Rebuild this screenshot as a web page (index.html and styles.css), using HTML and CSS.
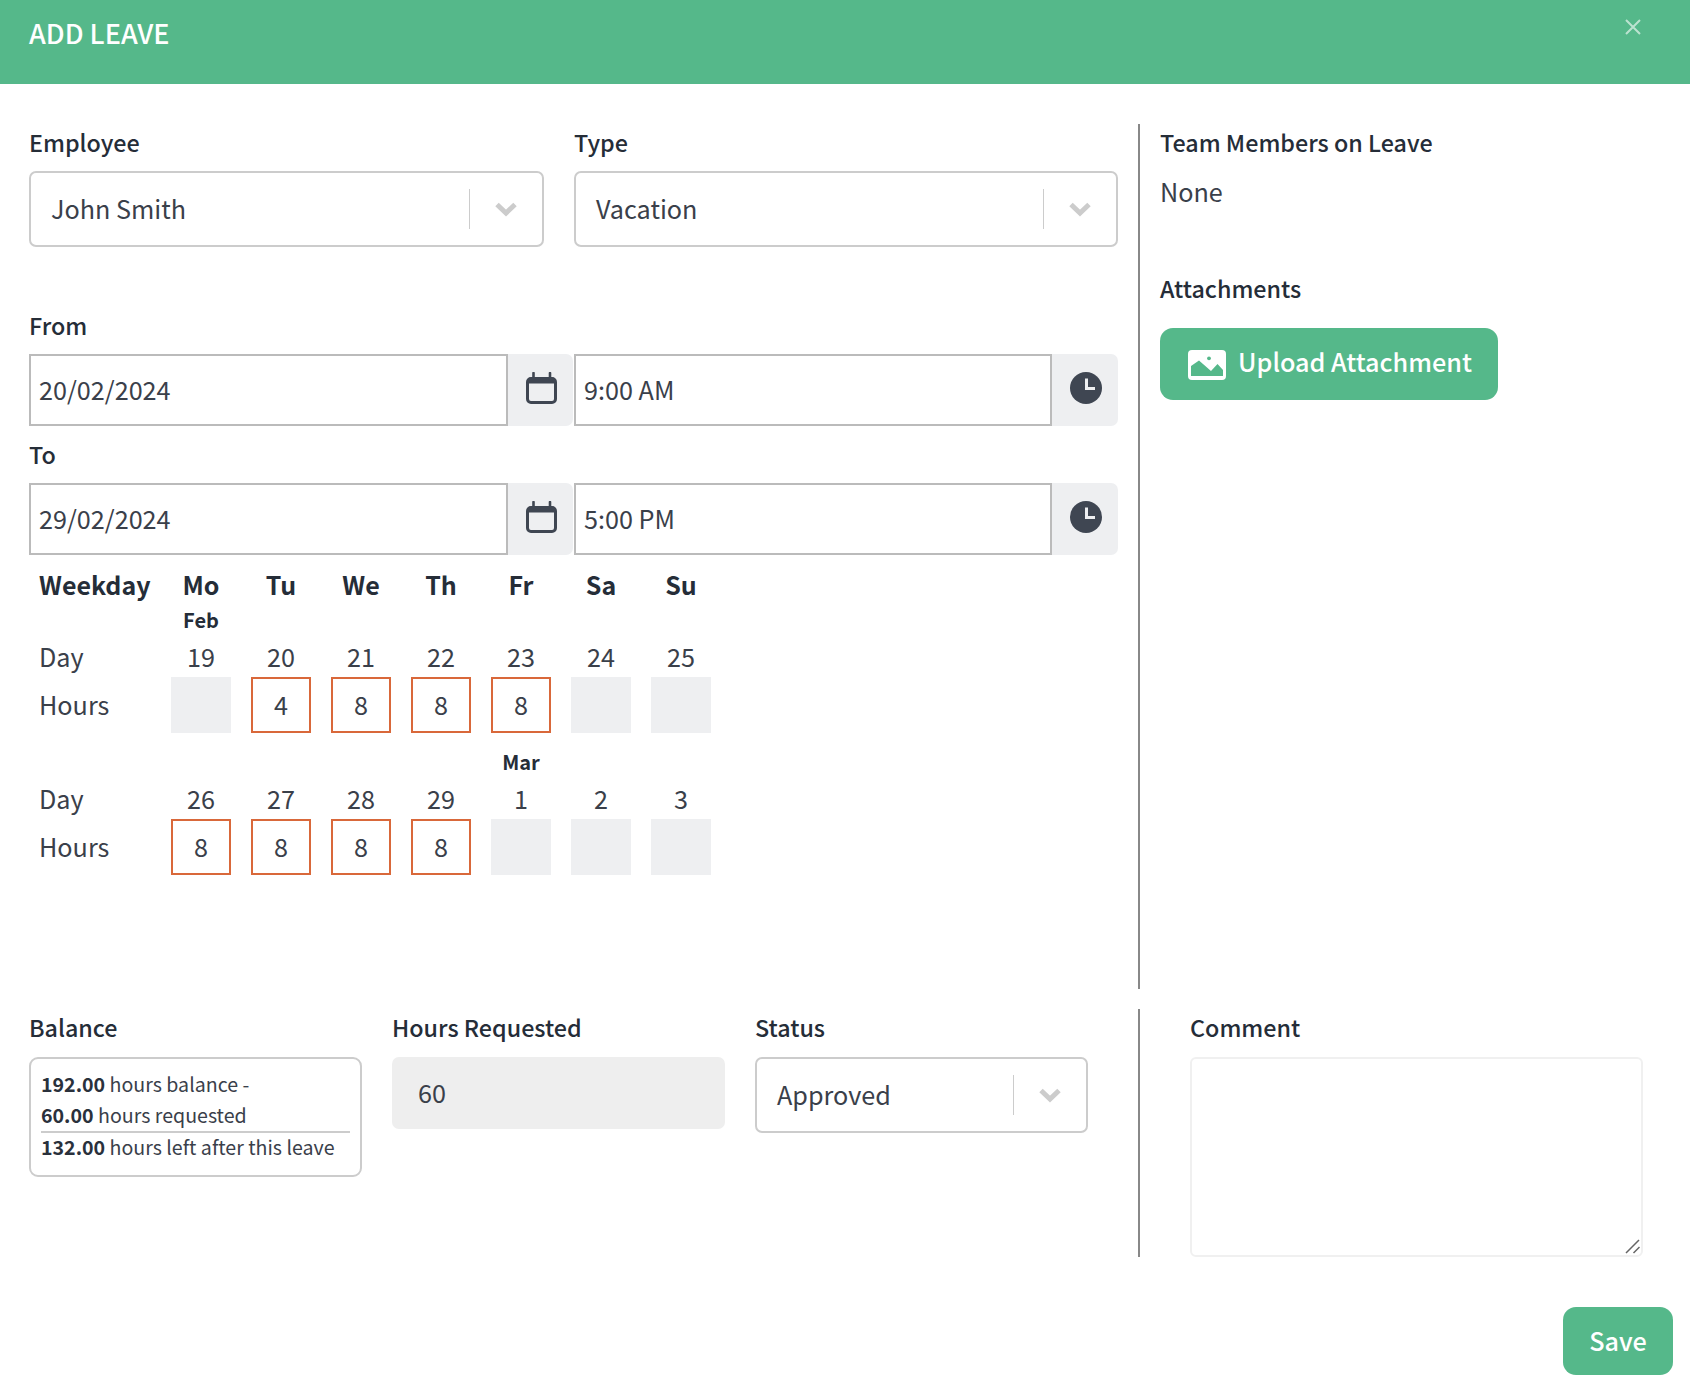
FILE: index.html
```html
<!DOCTYPE html>
<html lang="en">
<head>
<meta charset="utf-8">
<title>Add Leave</title>
<link rel="stylesheet" href="styles.css">
</head>
<body>
<header class="modal-header">
  <h1 class="modal-title">ADD LEAVE</h1>
  <svg class="close" viewBox="0 0 16 16" width="16" height="16"><path d="M1 1l14 14M15 1L1 15" fill="none" stroke="currentColor" stroke-width="2"/></svg>
</header>
<main>
  <section class="top">
    <div class="left">
      <div class="pair">
        <div>
          <label class="label">Employee</label>
          <div class="select"><span class="select-value">John Smith</span><span class="sep"></span><svg class="chev" viewBox="0 0 24 16" width="24" height="16"><path d="M3 3.500l9 8.500 9-8.500" fill="none" stroke="#ccc" stroke-width="5"/></svg></div>
        </div>
        <div>
          <label class="label">Type</label>
          <div class="select"><span class="select-value">Vacation</span><span class="sep"></span><svg class="chev" viewBox="0 0 24 16" width="24" height="16"><path d="M3 3.500l9 8.500 9-8.500" fill="none" stroke="#ccc" stroke-width="5"/></svg></div>
        </div>
      </div>
      <label class="label label-from">From</label>
      <div class="dt-row">
        <div class="group"><div class="input">20/02/2024</div><div class="addon"><svg viewBox="0 0 32 32" width="32" height="32"><path d="M7.500 1v6M24 1v6" stroke="#3f4652" stroke-width="2.600" stroke-linecap="round"/><rect x="1.500" y="6.500" width="28" height="24" rx="3.500" fill="none" stroke="#3f4652" stroke-width="3"/><path d="M1.500 9a3.500 3.500 0 0 1 3.500-3.500h21a3.500 3.500 0 0 1 3.500 3.500v2.500H1.500z" fill="#3f4652"/></svg></div></div>
        <div class="group"><div class="input">9:00 AM</div><div class="addon addon-time"><svg viewBox="0 0 32 32" width="32" height="32"><circle cx="16" cy="16" r="16" fill="#3f4652"/><path d="M16.500 6.500V16.500H25" fill="none" stroke="#eeeff1" stroke-width="3"/></svg></div></div>
      </div>
      <label class="label label-to">To</label>
      <div class="dt-row">
        <div class="group"><div class="input">29/02/2024</div><div class="addon"><svg viewBox="0 0 32 32" width="32" height="32"><path d="M7.500 1v6M24 1v6" stroke="#3f4652" stroke-width="2.600" stroke-linecap="round"/><rect x="1.500" y="6.500" width="28" height="24" rx="3.500" fill="none" stroke="#3f4652" stroke-width="3"/><path d="M1.500 9a3.500 3.500 0 0 1 3.500-3.500h21a3.500 3.500 0 0 1 3.500 3.500v2.500H1.500z" fill="#3f4652"/></svg></div></div>
        <div class="group"><div class="input">5:00 PM</div><div class="addon addon-time"><svg viewBox="0 0 32 32" width="32" height="32"><circle cx="16" cy="16" r="16" fill="#3f4652"/><path d="M16.500 6.500V16.500H25" fill="none" stroke="#eeeff1" stroke-width="3"/></svg></div></div>
      </div>
      <div class="cal">
        <div class="row row-head"><span class="rowname">Weekday</span><span>Mo</span><span>Tu</span><span>We</span><span>Th</span><span>Fr</span><span>Sa</span><span>Su</span></div>
        <div class="row row-month"><span></span><span>Feb</span><span></span><span></span><span></span><span></span><span></span><span></span></div>
        <div class="row row-day"><span class="rowname">Day</span><span>19</span><span>20</span><span>21</span><span>22</span><span>23</span><span>24</span><span>25</span></div>
        <div class="row row-hours"><span class="rowname">Hours</span><span class="off"></span><span class="on">4</span><span class="on">8</span><span class="on">8</span><span class="on">8</span><span class="off"></span><span class="off"></span></div>
        <div class="row row-month second"><span></span><span></span><span></span><span></span><span></span><span>Mar</span><span></span><span></span></div>
        <div class="row row-day"><span class="rowname">Day</span><span>26</span><span>27</span><span>28</span><span>29</span><span>1</span><span>2</span><span>3</span></div>
        <div class="row row-hours"><span class="rowname">Hours</span><span class="on">8</span><span class="on">8</span><span class="on">8</span><span class="on">8</span><span class="off"></span><span class="off"></span><span class="off"></span></div>
      </div>
    </div>
    <aside class="right">
      <label class="label">Team Members on Leave</label>
      <p class="none">None</p>
      <label class="label label-att">Attachments</label>
      <button class="upload" type="button"><svg class="upload-icon" viewBox="0 0 38 30" width="38" height="30"><rect width="38" height="30" rx="4" fill="#fff"/><path fill="#55b88a" d="M3 26V16l8-5.500L23 21l6.500-7 5.500 6v6z"/><circle cx="21" cy="8.300" r="1.900" fill="#55b88a"/></svg><span>Upload Attachment</span></button>
    </aside>
  </section>
  <section class="bottom">
    <div class="bottom-left">
      <div>
        <label class="label label-b">Balance</label>
        <div class="balance">
          <p><b>192.00</b> hours balance -</p>
          <p><b>60.00</b> hours requested</p>
          <hr>
          <p class="last"><b>132.00</b> hours left after this leave</p>
        </div>
      </div>
      <div>
        <label class="label label-b">Hours Requested</label>
        <div class="readonly">60</div>
      </div>
      <div>
        <label class="label label-b">Status</label>
        <div class="select"><span class="select-value">Approved</span><span class="sep"></span><svg class="chev" viewBox="0 0 24 16" width="24" height="16"><path d="M3 3.500l9 8.500 9-8.500" fill="none" stroke="#ccc" stroke-width="5"/></svg></div>
      </div>
    </div>
    <div class="bottom-right">
      <label class="label label-b">Comment</label>
      <div class="comment-wrap">
        <textarea class="comment"></textarea>
        <svg class="grip" viewBox="0 0 15 15" width="15" height="15"><path d="M1 14L14 1M8.500 14L14.500 8" fill="none" stroke="#666" stroke-width="1.500"/></svg>
      </div>
    </div>
  </section>
  <footer class="actions"><button class="save" type="button"><span>Save</span></button></footer>
</main>
</body>
</html>
```

FILE: styles.css
```css
* { box-sizing: border-box; }
html, body { margin: 0; padding: 0; background: #fff; }
body {
  width: 1690px;
  height: 1400px;
  overflow: hidden;
  font-family: "Noto Sans CJK SC", "Noto Sans", sans-serif;
  font-size: 25.2px;
  color: #3a404a;
}
.modal-header {
  height: 84px;
  background: #55b88a;
  display: flex;
  justify-content: space-between;
  padding: 0 49px 0 29px;
  color: #fff;
}
.modal-title {
  margin: 13px 0 0;
  font-size: 27px;
  line-height: 40px;
  font-weight: 500;
}
.close { margin-top: 19px; color: #fff; opacity: 0.6; }
.top { display: flex; margin-top: 40px; height: 865px; }
.left { width: 1088px; margin-left: 29px; }
.right {
  margin-left: 21px;
  border-left: 2px solid #888;
  padding-left: 20px;
  flex: 1;
}
.pair {
  display: grid;
  grid-template-columns: 515px 544px;
  column-gap: 30px;
}
.dt-row {
  display: grid;
  grid-template-columns: 544px 544px;
  column-gap: 1px;
}
.label {
  display: block;
  height: 36px;
  line-height: 36px;
  font-size: 23.3px;
  font-weight: 500;
  color: #252d38;
  margin-bottom: 11px;
}
.label-from { margin: 60px 0 11px; }
.label-to { margin: 10px 0 11px; }
.label-b { height: 34px; line-height: 37px; margin-bottom: 14px; }
.select {
  height: 76px;
  border: 2px solid #ccc;
  border-radius: 7px;
  display: flex;
  align-items: center;
  padding: 0 24px 0 20px;
  background: #fff;
}
.select-value { flex: 1; line-height: 36px; padding-bottom: 3px; }
.sep { width: 1px; height: 40px; background: #ccc; margin-right: 24px; }
.chev { display: block; }
.group { display: flex; height: 72px; }
.input {
  flex: 1;
  border: 2px solid #bbb;
  padding: 0 8px;
  line-height: 66px;
  background: #fff;
}
.addon {
  width: 65px;
  background: #eeeff1;
  border-radius: 0 7px 7px 0;
  display: flex;
  align-items: center;
  justify-content: center;
  padding: 0 0 4px 3px;
}
.addon-time { width: 66px; padding-left: 2px; }
.cal { margin-top: 10px; padding-left: 10px; }
.row {
  display: grid;
  grid-template-columns: 112px repeat(7, 60px);
  column-gap: 20px;
  text-align: center;
  align-items: center;
}
.row .rowname { text-align: left; }
.row-head { height: 40px; padding-bottom: 2px; font-weight: 700; font-size: 25px; color: #252d38; }
.row-head span { white-space: nowrap; }
.row-month { height: 28px; font-size: 20px; font-weight: 700; color: #252d38; }
.row-month.second { margin-top: 14px; }
.row-day { height: 44px; padding-top: 2px; }
.row-hours { height: 56px; }
.row-hours .rowname { padding-bottom: 2px; }
.off, .on { display: block; height: 56px; line-height: 56px; }
.off { background: #eeeff1; }
.on { border: 2px solid #d9683a; line-height: 50px; }
.none { margin: 0 0 61px; height: 38px; padding-top: 2px; line-height: 36px; }
.label-att { margin-bottom: 22px; line-height: 37px; }
.upload, .save {
  border: 0;
  background: #55b88a;
  color: #fff;
  font: inherit;
  font-weight: 500;
  display: flex;
  align-items: center;
  justify-content: center;
}
.upload {
  width: 338px;
  height: 72px;
  border-radius: 13px;
  gap: 12px;
  padding: 0 0 0 2px;
}
.upload span { padding-bottom: 6px; }
.upload-icon { margin-top: 2px; }
.bottom { display: flex; margin-top: 20px; height: 248px; }
.bottom-left {
  width: 1088px;
  margin-left: 29px;
  display: grid;
  grid-template-columns: 333px 333px 332.5px;
  column-gap: 30px;
  align-content: start;
}
.balance {
  height: 120px;
  border: 2px solid #ccc;
  border-radius: 9px;
  padding: 9px 10px 0;
  font-size: 19.6px;
  line-height: 31px;
}
.balance p { margin: 0; white-space: nowrap; }
.balance hr { margin: 1px 0 0; border: 0; height: 2px; background: #ccc; }
.balance p.last { line-height: 28px; }
.balance b { font-weight: 700; color: #2a313c; }
.readonly {
  height: 72px;
  background: #eee;
  border-radius: 7px;
  padding-left: 26px;
  line-height: 71px;
}
.bottom-right {
  margin-left: 21px;
  border-left: 2px solid #888;
  padding-left: 50px;
  flex: 1;
}
.comment-wrap { position: relative; width: 452.5px; height: 200px; }
.comment {
  display: block;
  width: 100%;
  height: 100%;
  border: 2px solid #f0f0f0;
  border-radius: 6px;
  background: #fff;
  outline: 0;
  resize: none;
}
.grip { position: absolute; right: 2.5px; bottom: 3px; }
.actions { display: flex; justify-content: flex-end; padding: 50px 17px 0 0; }
.save { width: 110px; height: 68px; border-radius: 13px; }
.save span { padding-bottom: 2px; }
```
